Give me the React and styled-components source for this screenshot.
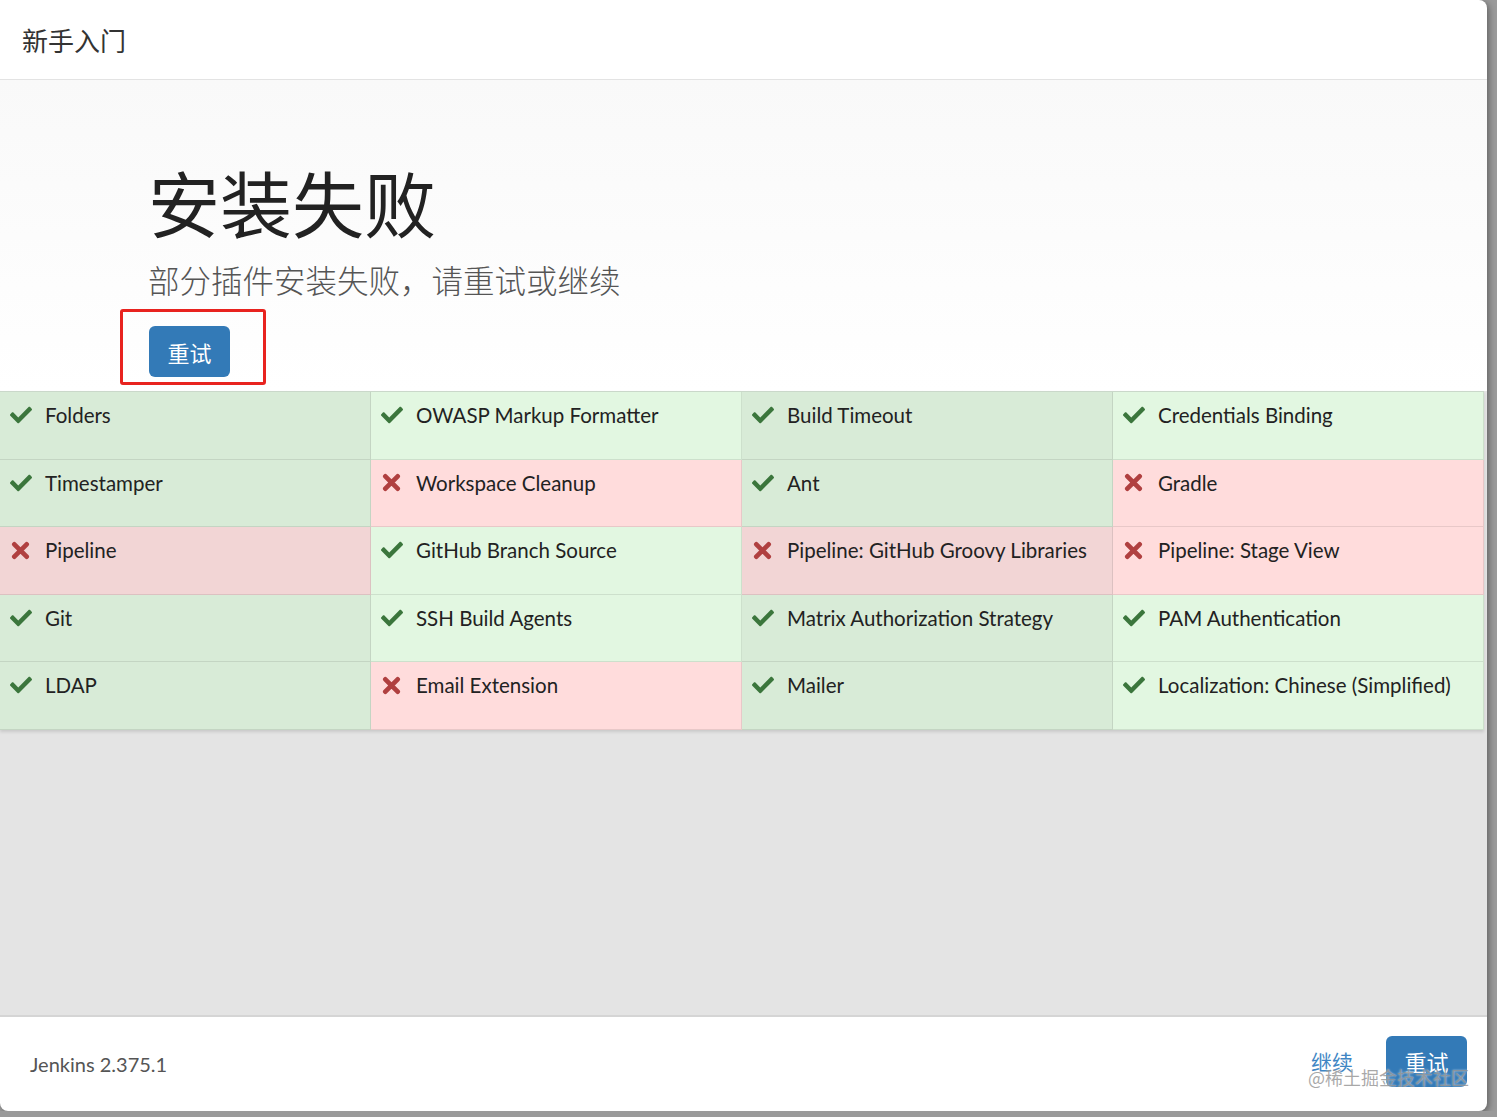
import React from "react";
import styled, { createGlobalStyle } from "styled-components";
import { FaCheck } from "react-icons/fa";

const GlobalStyle = createGlobalStyle`
  html, body {
    margin: 0;
    padding: 0;
    background: #9a9a9a;
  }
  * {
    box-sizing: border-box;
  }
`;

const latin = `Lato, "Noto Sans CJK SC", sans-serif`;
const cjk = `"Noto Sans CJK SC", Lato, sans-serif`;

const plugins = [
  { name: "Folders", ok: true },
  { name: "OWASP Markup Formatter", ok: true },
  { name: "Build Timeout", ok: true },
  { name: "Credentials Binding", ok: true },
  { name: "Timestamper", ok: true },
  { name: "Workspace Cleanup", ok: false },
  { name: "Ant", ok: true },
  { name: "Gradle", ok: false },
  { name: "Pipeline", ok: false },
  { name: "GitHub Branch Source", ok: true },
  { name: "Pipeline: GitHub Groovy Libraries", ok: false },
  { name: "Pipeline: Stage View", ok: false },
  { name: "Git", ok: true },
  { name: "SSH Build Agents", ok: true },
  { name: "Matrix Authorization Strategy", ok: true },
  { name: "PAM Authentication", ok: true },
  { name: "LDAP", ok: true },
  { name: "Email Extension", ok: false },
  { name: "Mailer", ok: true },
  { name: "Localization: Chinese (Simplified)", ok: true },
];

const Modal = styled.div`
  width: 1487px;
  height: 1111px;
  background: #fff;
  border-radius: 0 8px 8px 8px;
  display: flex;
  flex-direction: column;
  overflow: hidden;
  box-shadow: 2px 2px 6px rgba(0, 0, 0, 0.35);
`;

const Header = styled.header`
  height: 80px;
  flex: none;
  display: flex;
  align-items: center;
  padding-left: 22px;
  border-bottom: 1px solid #e3e3e3;
  font-family: ${cjk};
  font-size: 26px;
  color: #333;
`;

const Body = styled.main`
  flex: 1;
  background: #e4e4e4;
  display: flex;
  flex-direction: column;
`;

const Jumbotron = styled.section`
  background: linear-gradient(to bottom, #f9f9f9 0%, #ffffff 100%);
  padding: 80px 0 6px 148px;
`;

const Title = styled.h1`
  margin: 0;
  font-family: ${cjk};
  font-weight: 400;
  font-size: 72px;
  line-height: 82px;
  color: #222;
`;

const Lead = styled.p`
  margin: 14px 0 0;
  font-family: ${cjk};
  font-weight: 300;
  font-size: 31.5px;
  line-height: 46px;
  color: #555;
`;

const Highlight = styled.div`
  display: inline-block;
  margin: 7px 0 0 -28px;
  padding: 14px 33px 5px 26px;
  border: 3px solid #e8231f;
  border-radius: 3px;
`;

const Button = styled.button`
  width: 81px;
  height: 51px;
  border: none;
  border-radius: 6px;
  background: #337ab7;
  color: #fff;
  font-family: ${cjk};
  font-size: 22px;
  cursor: pointer;
`;

const Grid = styled.div`
  width: 1484px;
  display: grid;
  grid-template-columns: repeat(4, 1fr);
  grid-auto-rows: 67.6px;
  border-top: 1px solid #cad8ca;
  box-shadow: 0 2px 3px rgba(0, 0, 0, 0.12);
`;

const cellBg = ({ $ok, $odd }) =>
  $ok ? ($odd ? "#d8ebd7" : "#e2f7e1") : $odd ? "#f2d5d5" : "#ffdcdc";

const Cell = styled.div`
  display: flex;
  align-items: flex-start;
  gap: 13px;
  padding: 11px 10px 0 9px;
  background: ${cellBg};
  border-right: 1px solid rgba(0, 0, 0, 0.09);
  border-bottom: 1px solid rgba(0, 0, 0, 0.09);
  font-family: ${latin};
  font-size: 20.5px;
  color: #222;
  line-height: 24px;
`;

const Icon = styled.span`
  width: 23px;
  height: 24px;
  flex: none;
  display: flex;
  align-items: center;
  justify-content: center;
  color: ${({ $ok }) => ($ok ? "#3b763c" : "#b04040")};
  font-size: 22px;
`;

const Footer = styled.footer`
  position: relative;
  height: 96px;
  flex: none;
  display: flex;
  align-items: center;
  justify-content: space-between;
  padding: 0 20px 0 30px;
  border-top: 2px solid #d5d5d5;
  box-shadow: inset 0 1px 0 #fff;
`;

const Version = styled.span`
  font-family: ${latin};
  font-size: 20px;
  color: #555;
`;

const Actions = styled.div`
  display: flex;
  align-items: center;
  gap: 33px;
  margin-top: -6px;
`;

const Link = styled.a`
  font-family: ${cjk};
  font-size: 21px;
  color: #3f86c4;
  text-decoration: none;
`;

const Watermark = styled.span`
  position: absolute;
  right: 18px;
  bottom: 21px;
  font-family: ${cjk};
  font-size: 18px;
  color: rgba(140, 140, 140, 0.75);
  text-shadow: 0 0 2px rgba(255, 255, 255, 0.7);
  pointer-events: none;
`;

const Cross = () => (
  <svg width="19" height="19" viewBox="0 0 20 20">
    <path
      d="M3.5 3.5 L16.5 16.5 M16.5 3.5 L3.5 16.5"
      stroke="currentColor"
      strokeWidth="5"
      strokeLinecap="round"
      fill="none"
    />
  </svg>
);

export default function App() {
  return (
    <>
      <GlobalStyle />
      <Modal>
        <Header>新手入门</Header>
        <Body>
          <Jumbotron>
            <Title>安装失败</Title>
            <Lead>部分插件安装失败，请重试或继续</Lead>
            <Highlight>
              <Button>重试</Button>
            </Highlight>
          </Jumbotron>
          <Grid>
            {plugins.map((p, i) => (
              <Cell key={p.name} $ok={p.ok} $odd={i % 2 === 0}>
                <Icon $ok={p.ok}>{p.ok ? <FaCheck /> : <Cross />}</Icon>
                <span>{p.name}</span>
              </Cell>
            ))}
          </Grid>
        </Body>
        <Footer>
          <Version>Jenkins 2.375.1</Version>
          <Actions>
            <Link href="#">继续</Link>
            <Button>重试</Button>
          </Actions>
          <Watermark>@稀土掘金技术社区</Watermark>
        </Footer>
      </Modal>
    </>
  );
}
